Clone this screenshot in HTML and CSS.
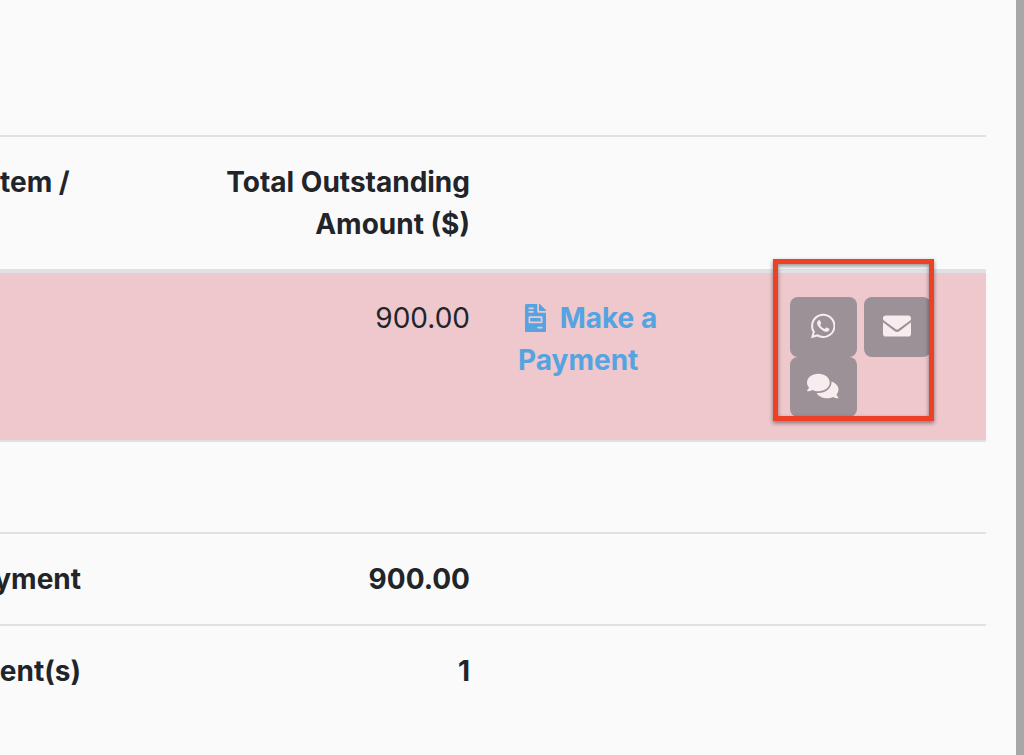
FILE: index.html
```html
<!DOCTYPE html>
<html lang="en">
<head>
<meta charset="utf-8">
<meta name="viewport" content="width=device-width, initial-scale=1">
<title>Outstanding payments</title>
<link rel="stylesheet" href="styles.css">
</head>
<body>
<main class="page">
  <table class="payments">
    <colgroup>
      <col class="col-item">
      <col class="col-amount">
      <col class="col-pay">
      <col class="col-actions">
    </colgroup>
    <thead>
      <tr>
        <th scope="col">tem /</th>
        <th scope="col" class="amount">Total Outstanding Amount ($)</th>
        <th></th>
        <th></th>
      </tr>
    </thead>
    <tbody>
      <tr class="overdue">
        <td></td>
        <td class="amount">900.00</td>
        <td>
          <a class="pay-link" href="#"><span class="link-icon"><svg class="icon" viewBox="0 0 384 512" aria-hidden="true"><path d="M288 256H96v64h192v-64zm89-151L279.1 7c-4.5-4.5-10.6-7-17-7H256v128h128v-6.1c0-6.3-2.5-12.4-7-16.9zm-153 31V0H24C10.7 0 0 10.7 0 24v464c0 13.3 10.7 24 24 24h336c13.3 0 24-10.7 24-24V160H248c-13.2 0-24-10.8-24-24zM64 72c0-4.42 3.58-8 8-8h80c4.42 0 8 3.58 8 8v16c0 4.42-3.58 8-8 8H72c-4.42 0-8-3.58-8-8V72zm0 64c0-4.42 3.58-8 8-8h80c4.42 0 8 3.58 8 8v16c0 4.42-3.58 8-8 8H72c-4.42 0-8-3.58-8-8v-16zm256 304c0 4.42-3.58 8-8 8h-80c-4.42 0-8-3.58-8-8v-16c0-4.42 3.58-8 8-8h80c4.42 0 8 3.58 8 8v16zm0-200v96c0 8.84-7.16 16-16 16H80c-8.84 0-16-7.16-16-16v-96c0-8.84 7.16-16 16-16h224c8.84 0 16 7.16 16 16z"/></svg></span> Make a Payment</a>
        </td>
        <td>
          <div class="actions">
            <button type="button" class="action" aria-label="Send WhatsApp reminder"><svg class="icon" viewBox="0 0 448 512" aria-hidden="true"><path d="M380.9 97.1C339 55.1 283.2 32 223.9 32c-122.4 0-222 99.6-222 222 0 39.1 10.2 77.3 29.6 111L0 480l117.7-30.9c32.4 17.7 68.9 27 106.1 27h.1c122.3 0 224.1-99.6 224.1-222 0-59.3-25.2-115-67.1-157zm-157 341.6c-33.2 0-65.7-8.9-94-25.7l-6.7-4-69.8 18.3L72 359.2l-4.4-7c-18.5-29.4-28.2-63.3-28.2-98.2 0-101.7 82.8-184.5 184.6-184.5 49.3 0 95.6 19.2 130.4 54.1 34.8 34.9 56.2 81.2 56.1 130.5 0 101.8-84.9 184.6-186.6 184.6zm101.2-138.2c-5.5-2.8-32.8-16.2-37.9-18-5.1-1.9-8.8-2.8-12.5 2.8-3.7 5.6-14.3 18-17.6 21.8-3.2 3.7-6.5 4.2-12 1.4-32.6-16.3-54-29.1-75.5-66-5.7-9.8 5.7-9.1 16.3-30.3 1.8-3.7.9-6.9-.5-9.7-1.4-2.8-12.5-30.1-17.1-41.2-4.5-10.8-9.1-9.3-12.5-9.5-3.2-.2-6.9-.2-10.6-.2-3.7 0-9.7 1.4-14.8 6.9-5.1 5.6-19.4 19-19.4 46.3 0 27.3 19.9 53.7 22.6 57.4 2.8 3.7 39.1 59.7 94.8 83.8 35.2 15.2 49 16.5 66.6 13.9 10.7-1.6 32.8-13.4 37.4-26.4 4.6-13 4.6-24.1 3.2-26.4-1.3-2.5-5-3.9-10.5-6.6z"/></svg></button>
            <button type="button" class="action" aria-label="Send email reminder"><svg class="icon" viewBox="0 0 512 512" aria-hidden="true"><path d="M48 64h416c26 0 48 22 48 48v17c0 8-4 15-10 20L278 315c-13 10-31 10-44 0L10 149c-6-5-10-12-10-20v-17c0-26 22-48 48-48zM0 188l216 162c24 18 56 18 80 0l216-162v212c0 26-22 48-48 48H48c-26 0-48-22-48-48z"/></svg></button>
            <button type="button" class="action" aria-label="Send message reminder"><svg class="icon" viewBox="0 0 576 512" aria-hidden="true"><path d="M416 192c0-88.4-93.1-160-208-160S0 103.6 0 192c0 34.3 14.1 65.9 38 92-13.4 30.2-35.5 54.2-35.8 54.5-2.2 2.3-2.8 5.7-1.5 8.7S4.8 352 8 352c36.6 0 66.9-12.3 88.7-25 32.2 15.7 70.3 25 111.3 25 114.9 0 208-71.6 208-160zm122 220c23.9-26 38-57.7 38-92 0-66.9-53.5-124.2-129.3-148.1.9 6.6 1.3 13.3 1.3 20.1 0 105.9-107.7 192-240 192-10.8 0-21.3-.8-31.7-1.9C207.8 439.6 281.8 480 368 480c41 0 79.1-9.2 111.3-25 21.8 12.7 52.1 25 88.7 25 3.2 0 6.1-1.9 7.3-4.8 1.3-2.9.7-6.3-1.5-8.7-.3-.3-22.4-24.2-35.8-54.5z"/></svg></button>
            <span class="highlight"></span>
          </div>
        </td>
      </tr>
      <tr class="spacer"><td colspan="4"></td></tr>
      <tr>
        <th scope="row"><span class="row-label">yment</span></th>
        <td class="amount total">900.00</td>
        <td></td>
        <td></td>
      </tr>
      <tr>
        <th scope="row"><span class="row-label">ent(s)</span></th>
        <td class="amount total">1</td>
        <td></td>
        <td></td>
      </tr>
    </tbody>
  </table>
</main>
</body>
</html>
```

FILE: styles.css
```css
* {
  box-sizing: border-box;
}

body {
  margin: 0;
  background: #fafafa;
  color: #212529;
  font: 400 28px/42px Inter, "Liberation Sans", sans-serif;
}

.page {
  min-height: 100vh;
  padding: 135px 30px 0 0;
  border-right: 8px solid #a7a7a7;
}

.payments {
  width: 100%;
  table-layout: fixed;
  border-collapse: separate;
  border-spacing: 0;
}

.col-item {
  width: 120px;
}

.col-pay {
  width: 272px;
}

.col-actions {
  width: 220px;
}

th,
td {
  padding: 24px;
  border-top: 2px solid #dee2e6;
  text-align: left;
  vertical-align: top;
}

th {
  font-weight: 700;
}

th:first-child {
  padding-left: 0;
  white-space: nowrap;
}

thead th {
  border-bottom: 4px solid #dee2e6;
}

.amount {
  text-align: right;
}

.total {
  font-weight: 700;
}

.row-label {
  display: flex;
  justify-content: flex-end;
  width: 81px;
}

.overdue td {
  padding-bottom: 23px;
  border-top: 0;
  background: #eec8cc;
}

.spacer td {
  height: 92px;
}

.icon {
  height: 28px;
  fill: currentColor;
}

.pay-link {
  color: #55a3e1;
  font-weight: 700;
  text-decoration: none;
}

.link-icon {
  display: inline-flex;
  justify-content: center;
  width: 35px;
  vertical-align: -4px;
}

.actions {
  position: relative;
  display: flex;
  flex-wrap: wrap;
  column-gap: 7px;
}

.action {
  display: flex;
  align-items: center;
  justify-content: center;
  width: 67px;
  height: 60px;
  padding: 0 1px 2px 0;
  border: 0;
  border-radius: 8px;
  background: #9b9197;
  color: #f9ecee;
}

.highlight {
  position: absolute;
  inset: -38px 28px -4px -17px;
  border: 5px solid #ec4127;
  filter: drop-shadow(0 2px 2px rgba(0, 0, 0, 0.45));
  pointer-events: none;
}
```
